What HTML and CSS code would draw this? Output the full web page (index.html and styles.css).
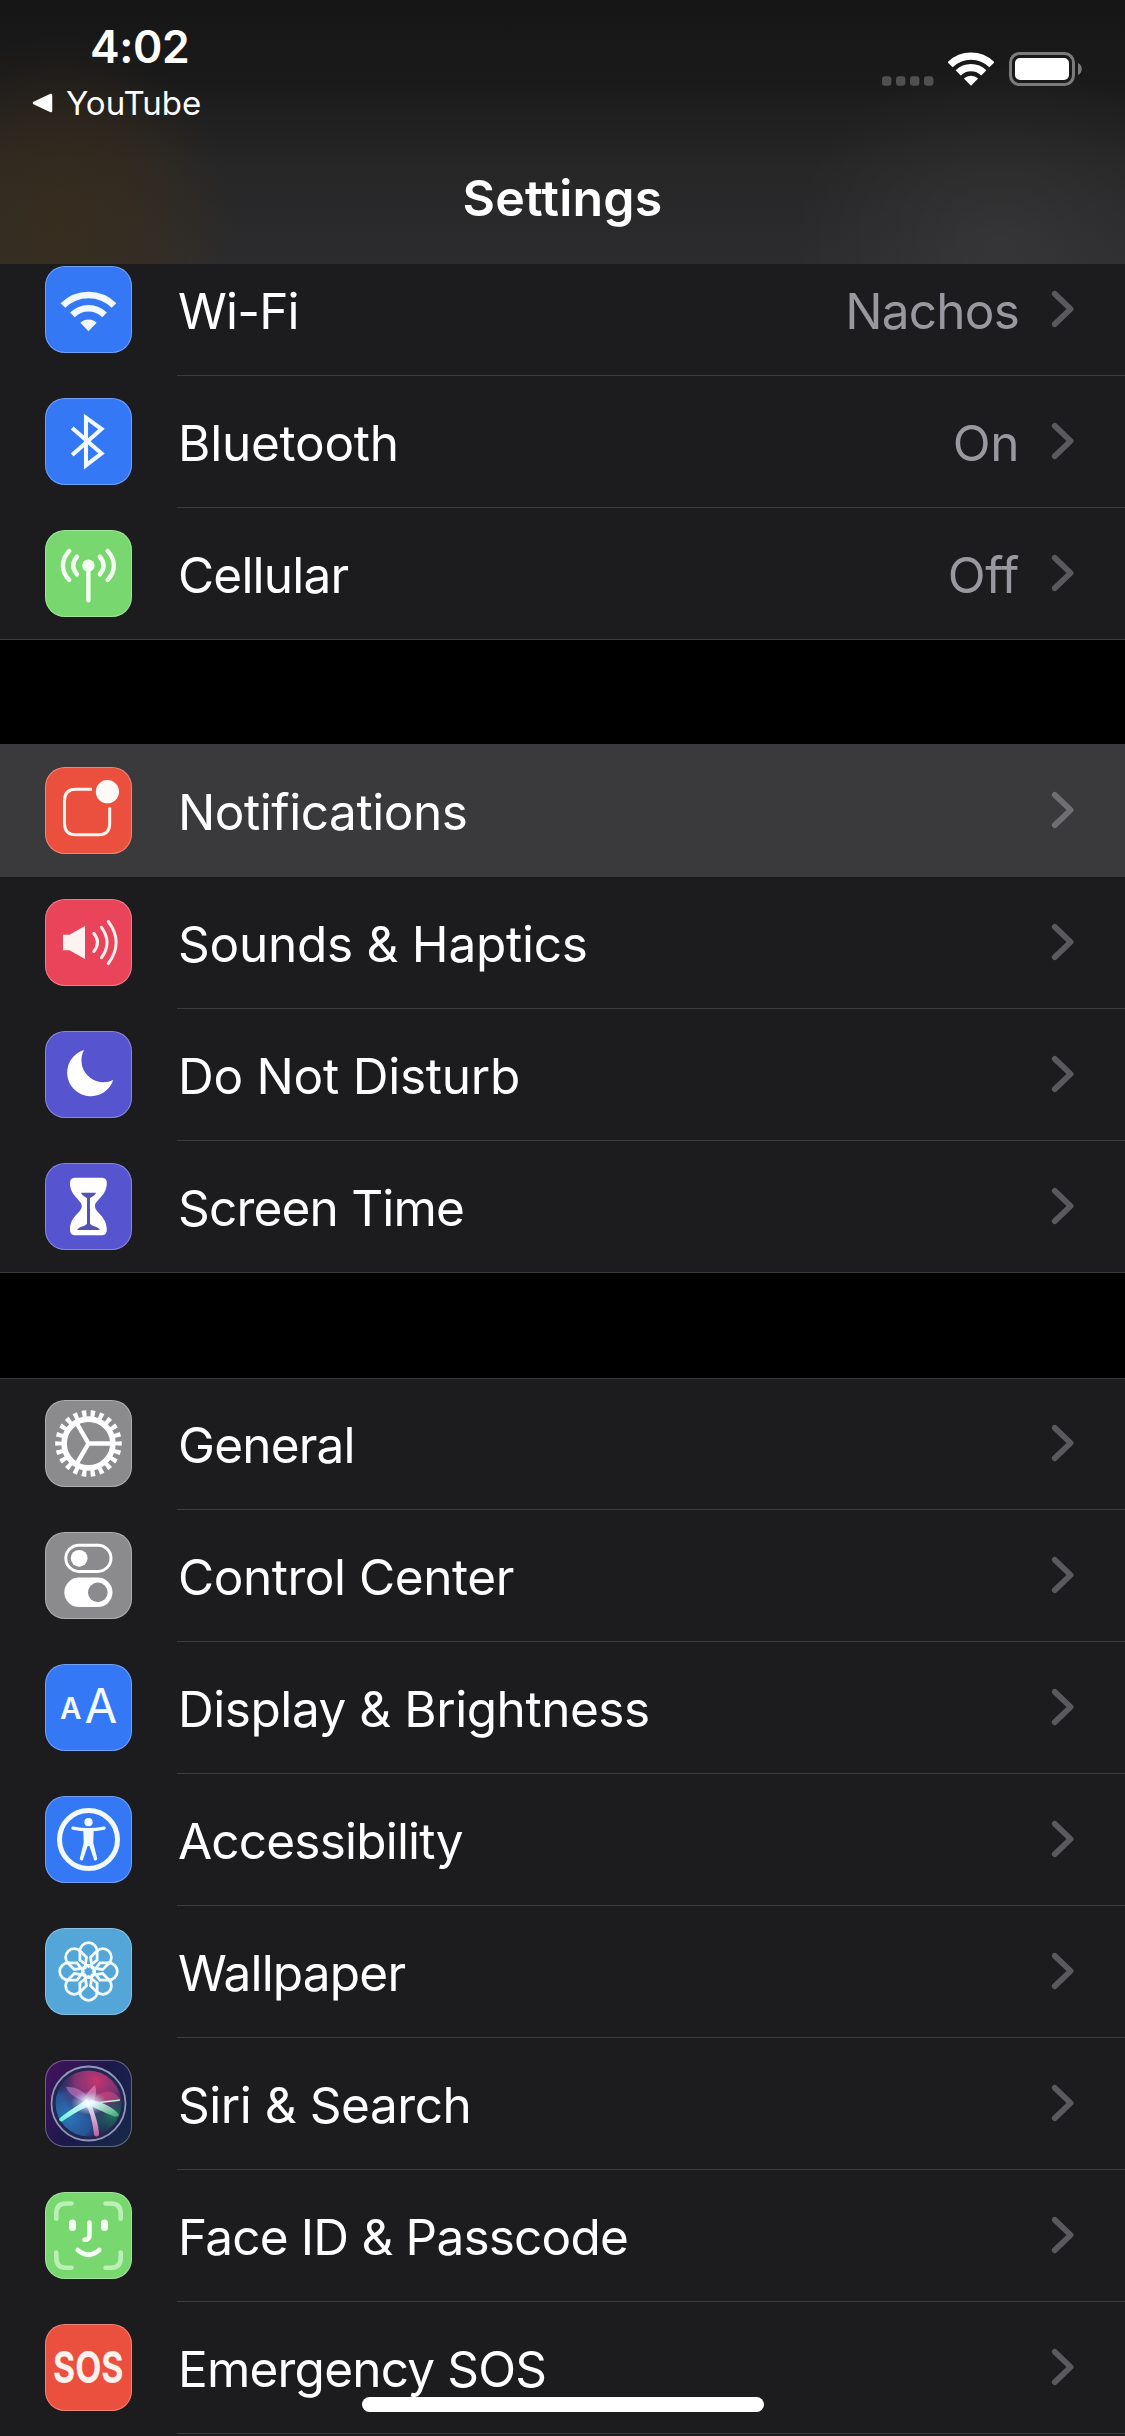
FILE: index.html
```html
<!DOCTYPE html>
<html lang="en">
<head>
<meta charset="utf-8">
<title>Settings</title>
<link rel="stylesheet" href="styles.css">
</head>
<body>
<svg class="defs" width="0" height="0" aria-hidden="true">
  <symbol id="chevron" viewBox="0 0 24 38"><path d="M3.8 3.8 L19.6 19 L3.8 34.2" fill="none" stroke="currentColor" stroke-width="5.8" stroke-linecap="round" stroke-linejoin="round"/></symbol>
</svg>
<div class="phone">
  <header class="header">
    <div class="status">
      <div class="status-left">
        <div class="time">4:02</div>
        <a class="back"><svg class="back-arrow" viewBox="0 0 21 20"><path d="M2 10 L19 2 V18 Z" fill="#fff" stroke="#fff" stroke-width="2.5" stroke-linejoin="round"/></svg><span>YouTube</span></a>
      </div>
      <div class="status-right">
        <svg class="dots" viewBox="0 0 52 10"><g fill="#505052"><rect x="0" y="0.3" width="9.4" height="9.4" rx="3"/><rect x="14" y="0.3" width="9.4" height="9.4" rx="3"/><rect x="28" y="0.3" width="9.4" height="9.4" rx="3"/><rect x="42" y="0.3" width="9.4" height="9.4" rx="3"/></g></svg>
        <svg class="signal" viewBox="0 0 46 34"><g fill="none" stroke="#fff" stroke-width="7.2"><path d="M2.1 12.8 A29.6 29.6 0 0 1 43.9 12.8"/><path d="M10.2 20.9 A18.1 18.1 0 0 1 35.8 20.9"/></g><path d="M23 33.7 L15.9 26.6 A10 10 0 0 1 30.1 26.6 Z" fill="#fff"/></svg>
        <svg class="battery" viewBox="0 0 74 34"><rect x="1.5" y="1.5" width="63" height="31" rx="9" fill="none" stroke="#7b7b7c" stroke-width="3"/><rect x="6" y="6" width="54" height="22" rx="5" fill="#fff"/><path d="M69 11 C74 13 74 21 69 23 Z" fill="#7b7b7c"/></svg>
      </div>
    </div>
    <h1 class="title">Settings</h1>
  </header>

  <main class="list">
    <section class="group group-first">
      <div class="row">
        <svg class="icon blue" viewBox="0 0 87 87"><g fill="none" stroke="#f2faff" stroke-width="6.5"><path d="M18 39.5 A36 36 0 0 1 69 39.5"/><path d="M27.4 48.9 A22.8 22.8 0 0 1 59.6 48.9"/></g><path d="M43.5 65.3 L35.4 56.7 A12 12 0 0 1 51.6 56.7 Z" fill="#f2faff"/></svg>
        <div class="cell"><span class="label tight">Wi-Fi</span><span class="value tight">Nachos</span><svg class="chevron"><use href="#chevron"/></svg></div>
      </div>
      <div class="row">
        <svg class="icon blue" viewBox="0 0 87 87"><path d="M27.2 30 L56.5 55.5 L41 67.3 V19.7 L56.5 31 L27.2 57" fill="none" stroke="#f2faff" stroke-width="4.1"/></svg>
        <div class="cell"><span class="label loose">Bluetooth</span><span class="value">On</span><svg class="chevron"><use href="#chevron"/></svg></div>
      </div>
      <div class="row">
        <svg class="icon green" viewBox="0 0 87 87"><circle cx="43.4" cy="35.6" r="6.2" fill="#f4fff2"/><g fill="none" stroke="#f4fff2" stroke-width="4.4" stroke-linecap="round"><path d="M43.4 38 V70.3"/><path d="M24.2 21 C15.8 30 15.8 41 24.2 50"/><path d="M32 26.7 C27 32.5 27 38.5 32 44.3"/><path d="M62.6 21 C71 30 71 41 62.6 50"/><path d="M54.8 26.7 C59.8 32.5 59.8 38.5 54.8 44.3"/></g></svg>
        <div class="cell"><span class="label tight">Cellular</span><span class="value">Off</span><svg class="chevron"><use href="#chevron"/></svg></div>
      </div>
    </section>

    <section class="group">
      <div class="row selected">
        <svg class="icon red" viewBox="0 0 87 87"><path d="M47 22.3 H31 Q19.5 22.3 19.5 33.5 V56.5 Q19.5 67.8 31 67.8 H53.5 Q64.7 67.8 64.7 56.5 V40.5" fill="none" stroke="#fff3ee" stroke-width="3"/><circle cx="62.4" cy="24.7" r="11.6" fill="#fffaf8"/></svg>
        <div class="cell"><span class="label">Notifications</span><svg class="chevron"><use href="#chevron"/></svg></div>
      </div>
      <div class="row">
        <svg class="icon pink" viewBox="0 0 87 87"><path d="M18 35.8 H24.5 L40 27 V60 L24.5 51.2 H18 Z" fill="#fff3f1"/><g fill="none" stroke="#fff0ef" stroke-width="3" stroke-linecap="round"><path d="M48.8 34.3 Q56.3 43.5 48.8 52.5"/><path d="M56.5 28.3 Q67.5 43.5 56.5 58.7"/><path d="M63.3 22.5 Q79 43.5 63.3 64.5"/></g></svg>
        <div class="cell"><span class="label loose">Sounds &amp; Haptics</span><svg class="chevron"><use href="#chevron"/></svg></div>
      </div>
      <div class="row">
        <svg class="icon purple" viewBox="0 0 87 87"><path d="M39 19 A23.6 23.6 0 1 0 68.2 49 A22 22 0 0 1 39 19 Z" fill="#fff"/></svg>
        <div class="cell"><span class="label loose">Do Not Disturb</span><svg class="chevron"><use href="#chevron"/></svg></div>
      </div>
      <div class="row">
        <svg class="icon purple" viewBox="0 0 87 87"><path d="M29.5 14.8 H57.3 Q61.8 15 61.8 20 C61.8 33 50 37 50 43 C50 50 61.8 53 61.8 66.5 Q61.8 72 57.3 72.2 H29.5 Q25 72 25 66.5 C25 53 36.8 50 36.8 43 C36.8 37 25 33 25 20 Q25 15 29.5 14.8 Z" fill="#fff"/><path d="M36 29.7 H51 Q50 32.5 45 35 V60.5 Q46 62.5 51.5 64 Q54.5 65.3 54.8 67 H32.2 Q32.5 65.3 35.5 64 Q41 62.5 42 60.5 V35 Q37 32.5 36 29.7 Z" fill="#5452b4"/></svg>
        <div class="cell"><span class="label tight">Screen Time</span><svg class="chevron"><use href="#chevron"/></svg></div>
      </div>
    </section>

    <section class="group group-last">
      <div class="row">
        <svg class="icon gray" viewBox="0 0 87 87"><g fill="none" stroke="#fff"><circle cx="43.5" cy="43.5" r="24.4" stroke-width="5.6"/><circle cx="43.5" cy="43.5" r="29.8" stroke-width="7" pathLength="220" stroke-dasharray="5 5" stroke-dashoffset="2.5"/><path d="M43.5 43.5 H68 M43.5 43.5 L31.2 22.3 M43.5 43.5 L31.2 64.7" stroke-width="4.4"/></g></svg>
        <div class="cell"><span class="label tight">General</span><svg class="chevron"><use href="#chevron"/></svg></div>
      </div>
      <div class="row">
        <svg class="icon gray" viewBox="0 0 87 87"><rect x="20.8" y="13.2" width="45.2" height="26.2" rx="13.1" fill="none" stroke="#fff" stroke-width="3"/><circle cx="34.2" cy="26.3" r="8.4" fill="#fff"/><rect x="19.3" y="45.6" width="48.2" height="29.4" rx="14.7" fill="#fff"/><circle cx="52.8" cy="60.4" r="9.8" fill="#8b8b8e"/></svg>
        <div class="cell"><span class="label">Control Center</span><svg class="chevron"><use href="#chevron"/></svg></div>
      </div>
      <div class="row">
        <svg class="icon blue" viewBox="0 0 87 87"><g class="glyph" fill="#f2faff" text-anchor="middle"><text x="25.8" y="55" font-size="29.5" font-weight="600">A</text><text x="55.8" y="59" font-size="47.5">A</text></g></svg>
        <div class="cell"><span class="label">Display &amp; Brightness</span><svg class="chevron"><use href="#chevron"/></svg></div>
      </div>
      <div class="row">
        <svg class="icon blue" viewBox="0 0 87 87"><circle cx="43.5" cy="43.5" r="29" fill="none" stroke="#f2faff" stroke-width="5"/><circle cx="43.5" cy="26.2" r="4.1" fill="#f2faff"/><path d="M28 32.2 Q43.5 35.4 59 32.2" fill="none" stroke="#f2faff" stroke-width="3.4" stroke-linecap="round"/><path d="M38.3 33.5 H48.7 L48.3 47 L52.3 62.8 Q51.5 65.4 49.2 64.2 L44.4 50 H42.6 L37.8 64.2 Q35.5 65.4 34.7 62.8 L38.7 47 Z" fill="#f2faff"/></svg>
        <div class="cell"><span class="label tight">Accessibility</span><svg class="chevron"><use href="#chevron"/></svg></div>
      </div>
      <div class="row">
        <svg class="icon sky" viewBox="0 0 87 87"><defs><path id="petal" d="M0 -5 L-8.6 -11.5 V-20.2 A8.6 8.6 0 0 1 8.6 -20.2 V-11.5 Z"/></defs><g transform="translate(43.5 43.5)" fill="none" stroke="#f2fcff" stroke-width="2.8"><use href="#petal"/><use href="#petal" transform="rotate(45)"/><use href="#petal" transform="rotate(90)"/><use href="#petal" transform="rotate(135)"/><use href="#petal" transform="rotate(180)"/><use href="#petal" transform="rotate(225)"/><use href="#petal" transform="rotate(270)"/><use href="#petal" transform="rotate(315)"/><circle r="6"/></g></svg>
        <div class="cell"><span class="label tight">Wallpaper</span><svg class="chevron"><use href="#chevron"/></svg></div>
      </div>
      <div class="row">
        <svg class="icon siri" viewBox="0 0 87 87">
          <defs>
            <radialGradient id="orbTop" cx="0.62" cy="0.15" r="0.6"><stop offset="0" stop-color="#c8356f"/><stop offset="0.55" stop-color="#8c3478" stop-opacity="0.85"/><stop offset="1" stop-color="#3a2560" stop-opacity="0"/></radialGradient>
            <radialGradient id="orbLeft" cx="0.2" cy="0.7" r="0.6"><stop offset="0" stop-color="#2a78b8"/><stop offset="0.6" stop-color="#2a5fa8" stop-opacity="0.8"/><stop offset="1" stop-color="#1c2b5c" stop-opacity="0"/></radialGradient>
            <radialGradient id="orbRight" cx="0.85" cy="0.65" r="0.38"><stop offset="0" stop-color="#1f7a62"/><stop offset="1" stop-color="#1d5a5a" stop-opacity="0"/></radialGradient>
            <radialGradient id="orbGlow"><stop offset="0" stop-color="#fff"/><stop offset="0.25" stop-color="#e8fbff" stop-opacity="0.85"/><stop offset="1" stop-color="#9fd8f0" stop-opacity="0"/></radialGradient>
            <linearGradient id="rayLeft" x1="1" y1="0" x2="0" y2="1"><stop offset="0" stop-color="#fff"/><stop offset="1" stop-color="#5ff0d8"/></linearGradient>
            <linearGradient id="rayRight" x1="0" y1="0" x2="1" y2="1"><stop offset="0" stop-color="#fff"/><stop offset="1" stop-color="#3aa878"/></linearGradient>
            <linearGradient id="rayDown" x1="0" y1="0" x2="0" y2="1"><stop offset="0" stop-color="#fff"/><stop offset="1" stop-color="#d260a8"/></linearGradient>
          </defs>
          <circle cx="43.5" cy="43.5" r="37" fill="#232650"/>
          <circle cx="43.5" cy="43.5" r="33" fill="url(#orbLeft)"/>
          <circle cx="43.5" cy="43.5" r="33" fill="url(#orbRight)"/>
          <circle cx="43.5" cy="43.5" r="33" fill="url(#orbTop)"/>
          <path d="M43 42 C34 40 24 35 21 27 C31 26 41 32 46 41 Z" fill="#d58ad8" opacity="0.5"/>
          <path d="M37 40 C41 35 46 28 50 25 C52 31 51 37 48 43 Z" fill="#ec8fc4" opacity="0.6"/>
          <path d="M46 41 C55 30 68 28 75 39 C67 43 56 44 46 43 Z" fill="#d34a7c" opacity="0.55"/>
          <path d="M45 43 C55 43 66 41 75 40" fill="none" stroke="#b8f0d8" stroke-width="1.4"/>
          <path d="M42 39 C32 46 19 54 14 59 Q14.500 62 17 61.500 C28 54 38 48 47 45 Z" fill="url(#rayLeft)"/>
          <path d="M46 40 C58 42 71 49 74 55 Q72 58 68 56 C60 53 51 48 43 45 Z" fill="url(#rayRight)"/>
          <path d="M41 45 C46 54 48 65 49 75 Q52 78 54 75 C54 65 50 55 46 43 Z" fill="url(#rayDown)" opacity="0.9"/>
          <ellipse cx="44" cy="43" rx="18" ry="12" fill="url(#orbGlow)"/>
          <circle cx="43.5" cy="43.5" r="37" fill="none" stroke="#8f98b8" stroke-width="1.8"/>
        </svg>
        <div class="cell"><span class="label">Siri &amp; Search</span><svg class="chevron"><use href="#chevron"/></svg></div>
      </div>
      <div class="row">
        <svg class="icon green" viewBox="0 0 87 87"><g fill="none" stroke="#f6fff4" stroke-width="4.6" stroke-linecap="round"><path stroke="#baf0b4" d="M26.500 11.500 H21 Q11.300 11.500 11.300 21.500 V26.700 M60.500 11.500 H66 Q75.700 11.500 75.700 21.500 V26.700 M26.500 75.700 H21 Q11.300 75.700 11.300 65.700 V60.500 M60.500 75.700 H66 Q75.700 75.700 75.700 65.700 V60.500"/><path d="M44.500 30.500 V43.500 Q44.500 47.800 39.500 47.800"/><path d="M32.700 58 Q43.500 67.500 54.300 58"/><path stroke-width="7" d="M27.500 31 V35.500 M59.500 31 V35.500"/></g></svg>
        <div class="cell"><span class="label tight">Face ID &amp; Passcode</span><svg class="chevron"><use href="#chevron"/></svg></div>
      </div>
      <div class="row">
        <svg class="icon red" viewBox="0 0 87 87"><text class="glyph" x="8" y="59" font-size="44" font-weight="700" fill="#fff1ec" textLength="70.500" lengthAdjust="spacingAndGlyphs">SOS</text></svg>
        <div class="cell"><span class="label tight">Emergency SOS</span><svg class="chevron"><use href="#chevron"/></svg></div>
      </div>
    </section>
  </main>
  <div class="home-indicator"></div>
</div>
</body>
</html>
```
FILE: styles.css
```css
* { box-sizing: border-box; }

body {
  margin: 0;
  background: #000;
  color: #fff;
  font-family: Inter, "Liberation Sans", sans-serif;
}

.defs { position: absolute; }

.phone {
  position: relative;
  width: 1125px;
  height: 2436px;
  overflow: hidden;
  background: #000;
}

/* Translucent navigation bar over the scrolled list */
.header {
  position: relative;
  z-index: 1;
  height: 264px;
  background:
    radial-gradient(ellipse 175px 190px at 60px 225px, rgba(66, 48, 22, 0.58), rgba(66, 48, 22, 0.42) 45%, rgba(66, 48, 22, 0) 100%),
    radial-gradient(ellipse 210px 180px at 1000px 240px, rgba(255, 255, 255, 0.05), rgba(255, 255, 255, 0) 100%),
    linear-gradient(#161616, #1a1a1b 30%, #262627 62%, #2c2c2e);
}

.status {
  display: flex;
  justify-content: space-between;
  height: 168px;
  padding: 20px 42px 0 32px;
}

.time {
  padding-left: 58px;
  font-size: 44.5px;
  font-weight: 600;
  line-height: 54px;
  letter-spacing: -0.4px;
}

.back {
  display: flex;
  align-items: center;
  gap: 13px;
  height: 57px;
  font-size: 33px;
}

.back-arrow { width: 21px; height: 20px; }

.status-right {
  display: flex;
  align-items: flex-end;
  height: 66px;
}

.dots { width: 52px; height: 10px; margin-right: 14px; }
.signal { width: 46px; height: 34px; margin-right: 15px; }
.battery { width: 74px; height: 34px; }

.title {
  margin: 0;
  font-size: 50px;
  font-weight: 600;
  line-height: 61px;
  letter-spacing: 0.2px;
  text-align: center;
}

.list { margin-top: -20px; }

.group {
  margin-bottom: 105px;
  background: #1c1c1e;
}

.group + .group { box-shadow: 0 -1px #3a3a3c; }

.group + .group-last {
  padding-bottom: 4px;
  box-shadow: inset 0 1px #3a3a3c;
}

.row {
  display: flex;
  align-items: center;
  height: 132px;
  padding-left: 45px;
}

.selected { background: #3a3a3c; }

.icon {
  flex: none;
  width: 87px;
  height: 87px;
  margin: 0 45px 1px 0;
  border-radius: 20px;
  box-shadow: inset 0 0 0 1px rgba(255, 255, 255, 0.3);
}

.blue { background: #3478f6; }
.green { background: #78d76f; }
.red { background: #eb4f3d; }
.pink { background: #ea445a; }
.purple { background: #5654ce; }
.gray { background: #8b8b8e; }
.sky { background: #54a5d8; }
.siri { background: linear-gradient(120deg, #46125f, #1b1a4a 50%, #172a48); }

.glyph { font-family: Inter, "Liberation Sans", sans-serif; }

.cell {
  display: flex;
  flex: 1;
  align-items: center;
  height: 132px;
  padding: 0 50px 0 1px;
  border-bottom: 1px solid #3b3b3e;
}

.row:last-child .cell { border-bottom-color: transparent; }
.group .row:last-child { box-shadow: inset 0 -1px #3b3b3e; }
.group-last .row:last-child { box-shadow: none; }
.group-last .row:last-child .cell { border-bottom-color: #3b3b3e; }
.selected .cell { border-bottom-color: #3a3a3c; }

.label,
.value {
  padding-top: 3px;
  font-size: 49.5px;
  line-height: 60px;
  letter-spacing: -0.45px;
  white-space: nowrap;
}

.label { flex: 1; }
.value { color: #98989e; }
.loose { letter-spacing: -0.25px; }
.tight { letter-spacing: -0.8px; }

.chevron {
  flex: none;
  width: 24px;
  height: 38px;
  margin: 0 0 1px 32px;
  color: rgba(235, 235, 245, 0.3);
}

.home-indicator {
  position: absolute;
  z-index: 2;
  bottom: 24px;
  left: 362px;
  width: 402px;
  height: 15px;
  border-radius: 8px;
  background: #fff;
}
```
